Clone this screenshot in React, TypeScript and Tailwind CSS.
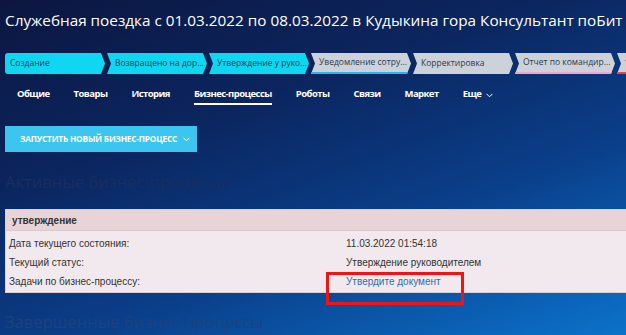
import React from 'react';

type Stage = { label: string; active: boolean; line?: string };

const stages: Stage[] = [
  { label: 'Создание', active: true },
  { label: 'Возвращено на дор...', active: true },
  { label: 'Утверждение у руко...', active: true },
  { label: 'Уведомление сотру...', active: false, line: 'border-b-[#2fb4ea]' },
  { label: 'Корректировка', active: false },
  { label: 'Отчет по командир...', active: false, line: 'border-b-[#f0a6c8]' },
  { label: 'технический', active: false, line: 'border-b-[#ea4545]' },
];

const tabs = ['Общие', 'Товары', 'История', 'Бизнес-процессы', 'Роботы', 'Связи', 'Маркет'];

const rows = [
  { name: 'Дата текущего состояния:', value: '11.03.2022 01:54:18' },
  { name: 'Текущий статус:', value: 'Утверждение руководителем' },
  { name: 'Задачи по бизнес-процессу:', value: 'Утвердите документ', link: true },
];

export default function App() {
  return (
    <div className="relative w-[626px] h-[335px] overflow-hidden bg-[linear-gradient(160deg,#0c1640_0%,#0b2660_35%,#0a3f8a_65%,#0a64b9_90%,#0c72c9_100%)] font-['Open_Sans',sans-serif]">
      <h1 className="pl-[5px] pt-[8px] h-[32px] leading-6 text-[15.3px] text-white whitespace-nowrap">
        Служебная поездка с 01.03.2022 по 08.03.2022 в Кудыкина гора Консультант поБит
      </h1>

      {/* stages */}
      <div className="mt-[21px] ml-[5px] flex gap-[2px] w-[720px]">
        {stages.map((s, i) => (
          <div
            key={s.label}
            className={`w-[100px] h-[21px] shrink-0 flex items-center text-[8.5px] text-[#2b3a4c] whitespace-nowrap overflow-hidden ${
              s.active ? 'bg-[#10d7f1]' : 'bg-[#cdd2da]'
            } ${s.line ? 'border-b-2 ' + s.line : ''} ${
              i === 0
                ? 'pl-[5px] rounded-l-[3px] [clip-path:polygon(0_0,calc(100%_-_4px)_0,100%_50%,calc(100%_-_4px)_100%,0_100%)]'
                : 'pl-[8px] [clip-path:polygon(0_0,calc(100%_-_4px)_0,100%_50%,calc(100%_-_4px)_100%,0_100%,4px_50%)]'
            }`}
          >
            {s.label}
          </div>
        ))}
      </div>

      {/* tabs */}
      <div className="mt-[13px] ml-[17px] flex gap-[24px] text-white text-[9.5px] font-bold tracking-[-0.55px]">
        {tabs.map((t) => (
          <div
            key={t}
            className={`h-[18px] leading-[14px] border-b-2 ${t === 'Бизнес-процессы' ? 'border-white' : 'border-transparent'}`}
          >
            {t}
          </div>
        ))}
        <div className="h-[18px] leading-[14px] flex items-start gap-[5px]">
          Еще
          <svg width="7" height="5" viewBox="0 0 7 5" className="mt-[6px]">
            <path d="M0.5 0.8 L3.5 3.8 L6.5 0.8" stroke="white" strokeWidth="1" fill="none" />
          </svg>
        </div>
      </div>

      {/* start button */}
      <button className="mt-[21px] ml-[5px] w-[192px] h-[26px] bg-[#3cc5ef] flex items-center pl-[15px] gap-[6px] text-white text-[8.3px] font-bold uppercase tracking-[-0.2px] whitespace-nowrap">
        Запустить новый бизнес-процесс
        <svg width="7" height="5" viewBox="0 0 7 5">
          <path d="M0.5 0.8 L3.5 3.8 L6.5 0.8" stroke="white" strokeWidth="1" fill="none" />
        </svg>
      </button>

      <h2 className="mt-[19px] ml-[5px] h-[22px] leading-[22px] text-[16.5px] text-[#1a2e5c]">Активные бизнес-процессы</h2>

      {/* active process table */}
      <div className="mt-[16px] ml-[5px] w-[640px] border border-[#d9cfd4] font-['Liberation_Sans',Arial,sans-serif] text-[10px] text-[#333]">
        <div className="h-[21px] bg-[#e8d3d6] flex items-center pl-[6px] font-bold border-b border-[#d6c8cd]">утверждение</div>
        <div className="bg-[#f1e9ed] pt-[3px] pb-[1px]">
          {rows.map((r) => (
            <div key={r.name} className="h-[19px] grid grid-cols-[337px_1fr] items-center pl-[3px]">
              <span>{r.name}</span>
              <span className={r.link ? 'text-[#2f6db5]' : ''}>{r.value}</span>
            </div>
          ))}
        </div>
      </div>

      <h2 className="mt-[18px] ml-[5px] h-[22px] leading-[22px] text-[16.5px] text-[#1d427c] whitespace-nowrap">
        Завершенные бизнес-процессы
      </h2>

      {/* annotation box */}
      <div className="absolute left-[326px] top-[272px] w-[138px] h-[33px] border-[3px] border-[#f21414]" />
    </div>
  );
}
